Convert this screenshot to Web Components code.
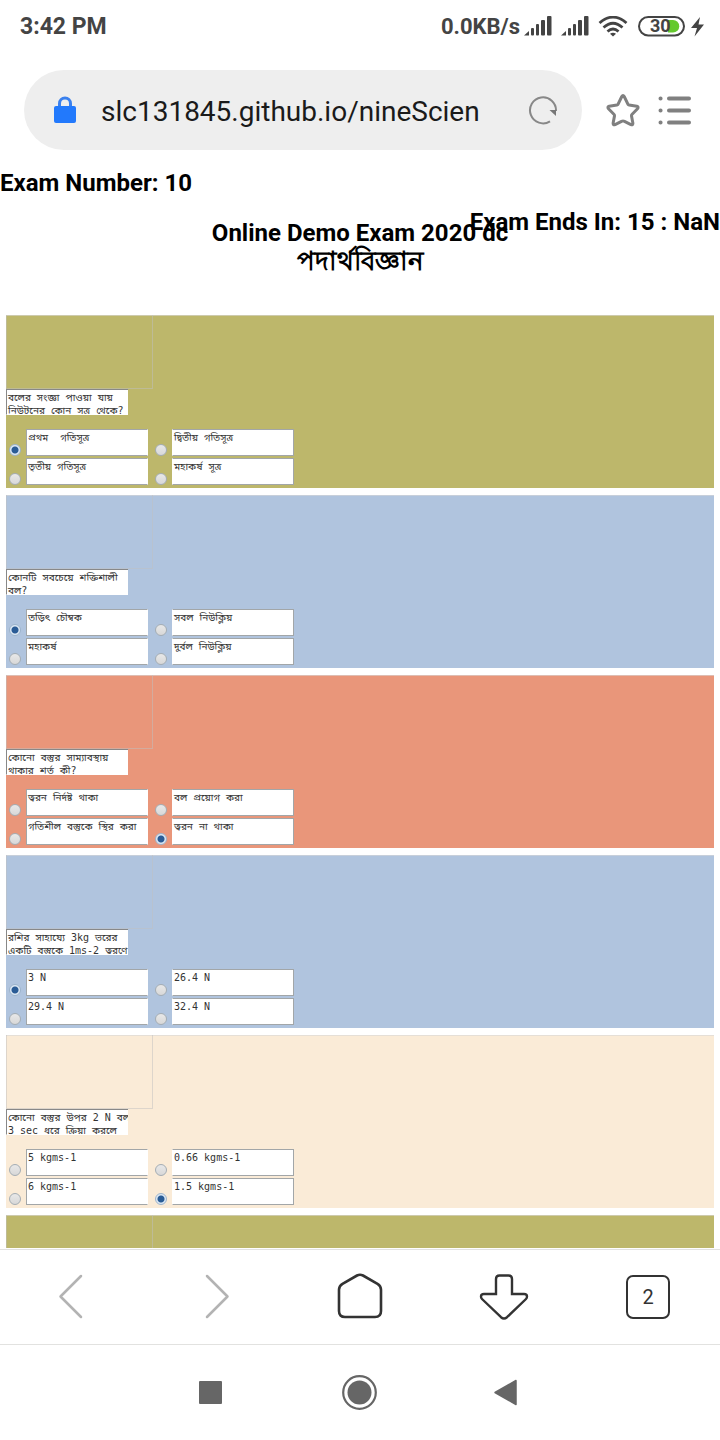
<!DOCTYPE html>
<html lang="bn">
<head>
<meta charset="utf-8">
<meta name="viewport" content="width=device-width, initial-scale=1">
<title>Online Demo Exam 2020</title>
<style>
  body { margin: 0; background: #fff; font-family: Roboto, "Noto Sans", sans-serif; color: #000; }
</style>
</head>
<body>
<phone-shell>
  <status-bar slot="top"></status-bar>
  <address-bar slot="top" url="slc131845.github.io/nineScien"></address-bar>
  <exam-page>
    <span slot="number">Exam Number: 10</span>
    <span slot="timer">Exam Ends In: 15 : NaN</span>
    <span slot="title">Online Demo Exam 2020 dc</span>
    <span slot="subject">পদার্থবিজ্ঞান</span>
  </exam-page>
  <browser-tools slot="bottom" tabs="2"></browser-tools>
  <system-nav slot="bottom"></system-nav>
</phone-shell>

<script>
const QUESTIONS = [
  { tone: '#bdb76b', ask: 'বলের সংজ্ঞা পাওয়া যায়\nনিউটনের কোন সূত্র থেকে?',
    options: ['প্রথম  গতিসূত্র', 'দ্বিতীয় গতিসূত্র', 'তৃতীয় গতিসূত্র', 'মহাকর্ষ সূত্র'], picked: 0 },
  { tone: '#b0c4de', ask: 'কোনটি সবচেয়ে শক্তিশালী\nবল?',
    options: ['তড়িৎ চৌম্বক', 'সবল নিউক্লিয়', 'মহাকর্ষ', 'দুর্বল নিউক্লিয়'], picked: 0 },
  { tone: '#e9967a', ask: 'কোনো বস্তুর সাম্যাবস্থায়\nথাকার শর্ত কী?',
    options: ['ত্বরন নির্দষ্ট থাকা', 'বল প্রয়োগ করা', 'গতিশীল বস্তুকে স্থির করা', 'ত্বরন না থাকা'], picked: 3 },
  { tone: '#b0c4de', ask: 'রশির সাহায্যে 3kg ভরের\nএকটি বস্তুকে 1ms-2 ত্বরণে',
    options: ['3 N', '26.4 N', '29.4 N', '32.4 N'], picked: 0 },
  { tone: '#faebd7', ask: 'কোনো বস্তুর উপর 2 N বল\n3 sec ধরে ক্রিয়া করলে',
    options: ['5 kgms-1', '0.66 kgms-1', '6 kgms-1', '1.5 kgms-1'], picked: 3 },
  { tone: '#bdb76b', ask: '', options: ['', '', '', ''] },
];

const define = (name, html, setup) => {
  const template = document.createElement('template');
  template.innerHTML = html;
  customElements.define(name, class extends HTMLElement {
    connectedCallback() {
      if (this.shadowRoot) return;
      const root = this.attachShadow({ mode: 'open' });
      root.append(template.content.cloneNode(true));
      if (setup) setup(this, root);
    }
  });
};

define('phone-shell', `
  <style>
    :host { display: flex; flex-direction: column; height: 100vh; background: #fff; }
    main { flex: 1; min-height: 0; overflow-y: auto; scrollbar-width: none; }
  </style>
  <slot name="top"></slot>
  <main><slot></slot></main>
  <slot name="bottom"></slot>`);

define('signal-bars', `
  <style>:host { display: block; height: 22px; } svg { display: block; }</style>
  <svg width="28" height="22" fill="#444" aria-hidden="true">
    <path d="M0 19.500l5-4.500v4.500z"/><rect x="7" y="12" width="3" height="7.500" rx="1"/><rect x="12" y="8" width="3" height="11.500" rx="1"/>
    <rect x="17" y="4" width="4" height="15.500" rx="1"/><rect x="23" y="0" width="4.500" height="19.500" rx="1"/>
  </svg>`);

define('status-bar', `
  <style>
    :host { display: flex; align-items: center; height: 52px; padding: 2px 16px 0 20px; box-sizing: border-box;
      color: #444; font-size: 23px; line-height: 28px; font-weight: 700; }
    .right { display: flex; align-items: center; margin-left: auto; }
    .speed { font-size: 22px; }
    svg { display: block; }
    signal-bars { margin-left: 4px; }
    signal-bars + signal-bars { margin-left: 9px; }
    .wifi { margin-left: 9px; }
    .battery { display: grid; position: relative; width: 47px; height: 22px; margin-left: 10px; }
    .battery span { position: absolute; left: 12px; top: 0; font-size: 18px; line-height: 20px; font-weight: 700; }
    .bolt { margin-left: 6px; }
  </style>
  <span>3:42 PM</span>
  <div class="right">
    <span class="speed">0.0KB/s</span>
    <signal-bars></signal-bars><signal-bars></signal-bars>
    <svg class="wifi" width="30" height="22" viewBox="0 0 30 22" fill="none" stroke="#444" stroke-width="2.800" aria-hidden="true">
      <path d="M1.500 7Q15-4.700 28.500 7M5.500 11.500Q15 3 24.500 11.500M9.500 15.500Q15 10.500 20.500 15.500"/><path d="M12 17.800Q15 15.500 18 17.800L15 20.500z" fill="#444" stroke="none"/>
    </svg>
    <div class="battery">
      <svg width="47" height="22" aria-hidden="true"><rect x="1" y="1" width="45" height="18.500" rx="9.200" fill="#fff" stroke="#444" stroke-width="2"/><path d="M30 4h5a6.200 6.200 0 0 1 0 12.500h-5z" fill="#64c92d"/></svg>
      <span>30</span>
    </div>
    <svg class="bolt" width="13" height="22" viewBox="0 0 13 22" fill="#444" aria-hidden="true"><path d="M9 1L0 12h6L3.500 20.500 13 8.500H7.500z"/></svg>
  </div>`);

define('address-bar', `
  <style>
    :host { display: flex; align-items: center; height: 116px; padding: 0 28px 0 24px; box-sizing: border-box; }
    form { flex: 1; display: flex; align-items: center; height: 80px; padding: 0 24px 0 30px; box-sizing: border-box;
      background: #eee; border-radius: 40px; min-width: 0; }
    input { flex: 1; min-width: 0; margin: 0 0 0 25px; padding: 4px 0 0; border: 0; outline: 0; background: none;
      font: 400 28px/36px Roboto, "Noto Sans", sans-serif; color: #1a1a1a; }
    button { display: block; padding: 0; border: 0; background: none; }
    svg { display: block; }
    .star { margin-left: 24px; }
    .menu { margin-left: 18px; }
  </style>
  <form>
    <svg width="22" height="28" aria-hidden="true"><path d="M5.500 12V7.500a5.500 5.500 0 0 1 11 0V12" fill="none" stroke="#3a80ee" stroke-width="3"/><rect y="10" width="22" height="17" rx="2" fill="#2279fc"/></svg>
    <input type="text" aria-label="Address" spellcheck="false">
    <button type="button" aria-label="Reload">
      <svg width="30" height="30" fill="none" stroke="#888" stroke-width="2"><path d="M28 16A13 13 0 1 0 22 26.300"/><path d="M21.500 15H28v6z" fill="#777" stroke="none"/></svg>
    </button>
  </form>
  <button class="star" type="button" aria-label="Bookmark">
    <svg width="34" height="34" fill="none" stroke="#808080" stroke-width="3" stroke-linejoin="round"><path d="M15.800 3.500q1.200-2 2.400 0l3.700 7.700c.3.500.7.800 1.200.9l7.700 1.200q2.200.7.700 2.500l-5.600 5.700c-.4.400-.5.900-.4 1.400l1.400 7.300q0 2.200-2 1.500l-6.900-3.500a2 2 0 0 0-2 0l-6.900 3.500q-2 .7-2-1.500l1.400-7.300c.1-.5 0-1-.4-1.400l-5.600-5.700q-1.500-1.800.7-2.500l7.700-1.200c.5-.1.900-.4 1.200-.9z"/></svg>
  </button>
  <button class="menu" type="button" aria-label="Menu">
    <svg width="34" height="32" stroke="#808080" stroke-width="4" stroke-linecap="round"><path d="M11 4.500h20M11 16.500h20M11 28.500h20M2.500 4.500h.1M2.500 16.500h.1M2.500 28.500h.1"/></svg>
  </button>`,
  (host, root) => { root.querySelector('input').value = host.getAttribute('url'); });

define('exam-page', `
  <style>
    :host { display: block; position: relative; font-size: 24px; line-height: 28px; font-weight: 700; }
    h2, h1 { margin: 0; font: inherit; }
    h2 { padding-top: 1px; }
    h1 { padding-top: 22px; text-align: center; }
    h1 slot { display: block; }
    .subject { font-size: 26px; }
    .timer { position: absolute; right: 0; top: 40px; }
    .list { display: grid; gap: 7px; padding: 40px 6px 0; font-weight: 400; }
  </style>
  <h2><slot name="number"></slot></h2>
  <h1><slot name="title"></slot><slot class="subject" name="subject"></slot></h1>
  <div class="timer"><slot name="timer"></slot></div>
  <div class="list"></div>`,
  (host, root) => {
    const list = root.querySelector('.list');
    for (const data of QUESTIONS) {
      const item = document.createElement('exam-question');
      item.data = data;
      list.append(item);
    }
  });

define('exam-question', `
  <style>
    :host { display: block; padding-bottom: 3px; background: var(--tone); }
    .figure { width: 147px; height: 74px; box-sizing: border-box; border: 1px solid rgba(192,192,192,.5); border-top: 0; }
    .edge { box-shadow: inset 0 1px 0 rgba(215,215,215,.6); }
    textarea { display: block; box-sizing: border-box; width: 122px; height: 27px; margin: 0; padding: 1px; border: 1px solid #a2a6a8; border-radius: 0;
      background: #fff; color: #333; font: 10px/13px "DejaVu Sans Mono", "Noto Sans Bengali", monospace; white-space: pre; overflow: hidden; resize: none; outline: 0; }
    .ask { height: 26px; border-color: #888 #fff #fff #888; border-right: 0; }
    .options { display: grid; grid-template-columns: repeat(2, 142px); gap: 2px 4px; padding-top: 14px; }
    .option { display: flex; align-items: flex-end; }
    .option:nth-child(odd) textarea { border-right-color: #fff; }
    .option:nth-child(even) textarea { border-left-color: #fff; }
    input { appearance: none; flex: none; box-sizing: border-box; width: 12px; height: 12px; margin: 0 5px 0 3px; border: 1px solid #a4adb4; border-radius: 50%;
      background: linear-gradient(#e8e8e8, #d8d8d8); }
    input:checked { background: radial-gradient(circle, #2a5c96 0 3px, #dce8f4 4px); border-color: #9db4cc; }
  </style>
  <div class="edge"><div class="figure"></div></div>
  <textarea class="ask" aria-label="Question" spellcheck="false" readonly></textarea>
  <div class="options"></div>`,
  (host, root) => {
    const { tone, ask, options, picked } = host.data;
    host.style.setProperty('--tone', tone);
    root.querySelector('.ask').value = ask;
    const box = root.querySelector('.options');
    options.forEach((text, i) => {
      const row = document.createElement('div');
      row.className = 'option';
      row.innerHTML = '<input type="radio" name="answer"><textarea spellcheck="false" readonly></textarea>';
      const [radio, area] = row.children;
      radio.checked = i === picked;
      radio.setAttribute('aria-label', text || 'Option ' + (i + 1));
      area.setAttribute('aria-label', 'Option ' + (i + 1));
      area.value = text;
      box.append(row);
    });
  });

define('browser-tools', `
  <style>
    :host { display: grid; grid-template-columns: repeat(5, 1fr); height: 96px; margin-top: 1px; box-sizing: border-box;
      border: solid #e2e2e0; border-width: 1px 0; background: #fff; }
    button { display: grid; place-items: center; padding: 0; border: 0; background: none; }
    svg { display: block; }
    .tabs span { display: grid; place-items: center; width: 44px; height: 44px; box-sizing: border-box; border: 2px solid #333; border-radius: 7px;
      font: 400 20px/24px Roboto, sans-serif; color: #333; }
  </style>
  <button type="button" aria-label="Back"><svg width="50" height="48" fill="none" stroke="#b3b3b3" stroke-width="2.500" stroke-linecap="round" stroke-linejoin="round"><path d="M34 3L13.500 23.500 34 44"/></svg></button>
  <button type="button" aria-label="Forward"><svg width="50" height="48" fill="none" stroke="#b3b3b3" stroke-width="2.500" stroke-linecap="round" stroke-linejoin="round"><path d="M16 3l20.500 20.500L16 44"/></svg></button>
  <button type="button" aria-label="Home"><svg width="50" height="48" fill="none" stroke="#333" stroke-width="2.600"><path d="M22 2.500q3-1.500 6 0l14.500 8.300q3.500 2 3.500 6V38q0 6-6 6H10q-6 0-6-6V16.800q0-4 3.500-6z"/></svg></button>
  <button type="button" aria-label="Downloads"><svg width="50" height="48" fill="none" stroke="#333" stroke-width="2.400"><path d="M17 21V6q0-3.500 3.500-3.500h9q3.500 0 3.500 3.500v15H45q3 0 3 2.500 0 1.500-1 2.500L28 44.200q-3 2.400-6 0L3 26q-1-1-1-2.500Q2 21 5 21z"/></svg></button>
  <button class="tabs" type="button" aria-label="Tabs"><span></span></button>`,
  (host, root) => { root.querySelector('.tabs span').textContent = host.getAttribute('tabs'); });

define('system-nav', `
  <style>
    :host { display: flex; justify-content: center; gap: 100px; align-items: center; height: 95px; padding-right: 4px; background: #fff; }
    button { padding: 0; border: 0; background: none; width: 48px; height: 48px; }
    svg { display: block; margin: auto; }
  </style>
  <button type="button" aria-label="Recent apps"><svg width="48" height="36"><rect x="13" y="6" width="23" height="23" rx="1" fill="#666"/></svg></button>
  <button type="button" aria-label="Home"><svg width="48" height="36"><circle cx="25.500" cy="17.500" r="16.300" fill="none" stroke="#666" stroke-width="2.200"/><circle cx="25.500" cy="17.500" r="12" fill="#666"/></svg></button>
  <button type="button" aria-label="Back"><svg width="48" height="36"><path d="M34 5.500v24L13 17.500z" fill="#666" stroke="#666" stroke-width="1.500" stroke-linejoin="round"/></svg></button>`);
</script>
</body>
</html>
